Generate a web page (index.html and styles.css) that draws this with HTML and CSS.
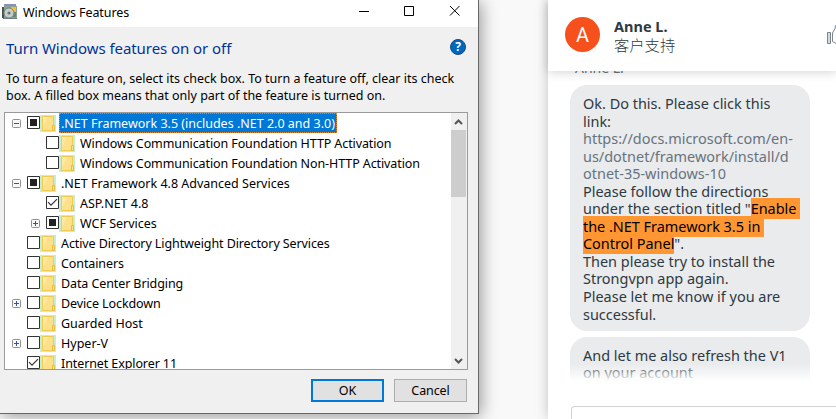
FILE: index.html
```
<!DOCTYPE html>
<html lang="en">
<head>
<meta charset="utf-8">
<title>Windows Features</title>
<link rel="stylesheet" href="styles.css">
</head>
<body>
<svg width="0" height="0" class="defs">
  <symbol id="folder" viewBox="0 0 16 17"><path fill="#c6efce" d="M0 0h16v17H0z"/><path fill="#ffe08a" stroke="#f0cb4f" d="M2.5 1.5h11v14h-11z"/><path fill="#ffe9a6" d="M3 2h5L3 12z"/><path fill="#ffe08a" stroke="#e8bd3c" d="M12.5 10.5h2v5h-2z"/></symbol>
  <symbol id="minus" viewBox="0 0 9 9"><rect x=".5" y=".5" width="8" height="8" rx="1" fill="#f8f8f8" stroke="#919191"/><path d="M2 4.5h5" stroke="#3455a4"/></symbol>
  <symbol id="plus" viewBox="0 0 9 9"><rect x=".5" y=".5" width="8" height="8" rx="1" fill="#f8f8f8" stroke="#919191"/><path d="M2 4.5h5M4.5 2v5" stroke="#3455a4"/></symbol>
  <symbol id="off" viewBox="0 0 13 13"><path d="M.5.5h12v12H.5z" fill="#fff" stroke="#333"/></symbol>
  <symbol id="part" viewBox="0 0 13 13"><path d="M.5.5h12v12H.5z" fill="#fff" stroke="#333"/><path d="M3 3h7v7H3z" fill="#222"/></symbol>
  <symbol id="on" viewBox="0 0 13 13"><path d="M.5.5h12v12H.5z" fill="#fff" stroke="#333"/><path d="M2 6.2l3 3 6-6" fill="none" stroke="#333" stroke-width="1.2"/></symbol>
</svg>
<main class="screen">
  <section class="window">
    <header class="titlebar">
      <svg class="app" width="16" height="17" viewBox="0 0 16 17"><path d="M2 1h12v3H2z" fill="#8791bd"/><path d="M2 3h13v13H2z" fill="#8ba294"/><path d="M9 4h5v5H9z" fill="#f5bd35"/><path d="M10 9h4v5h-4z" fill="#648a69"/><path d="M0 4h2v11H0z" fill="#47524f"/><circle cx="7" cy="10" r="5" fill="#c6ceca" stroke="#778580"/><circle cx="7" cy="10" r="1.6" fill="#68736f"/><path d="M1 15.5h14" stroke="#6e7c8b"/></svg>
      <h1>Windows Features</h1>
      <svg class="controls" width="108" height="12" viewBox="0 0 108 12" fill="none" stroke="#000"><path d="M0 6.5h10M45.500 1.500h9v9h-9zM91 1l9.500 9.500M100.500 1l-9.500 9.500"/></svg>
    </header>
    <div class="content">
      <div class="heading"><h2>Turn Windows features on or off</h2><span class="help">?</span></div>
      <p class="intro"><span>To turn a feature on, select its check box. To turn a feature off, clear its check</span><br><span>box. A filled box means that only part of the feature is turned on.</span></p>
      <div class="list">
        <ul class="tree">
          <li><svg class="exp"><use href="#minus"/></svg><svg class="check"><use href="#part"/></svg><svg class="folder"><use href="#folder"/></svg><span class="selected">.NET Framework 3.5 (includes .NET 2.0 and 3.0)</span></li>
          <li class="child"><i class="exp"></i><svg class="check"><use href="#off"/></svg><svg class="folder"><use href="#folder"/></svg><span>Windows Communication Foundation HTTP Activation</span></li>
          <li class="child"><i class="exp"></i><svg class="check"><use href="#off"/></svg><svg class="folder"><use href="#folder"/></svg><span>Windows Communication Foundation Non-HTTP Activation</span></li>
          <li><svg class="exp"><use href="#minus"/></svg><svg class="check"><use href="#part"/></svg><svg class="folder"><use href="#folder"/></svg><span class="wide">.NET Framework 4.8 Advanced Services</span></li>
          <li class="child"><i class="exp"></i><svg class="check"><use href="#on"/></svg><svg class="folder"><use href="#folder"/></svg><span class="wide">ASP.NET 4.8</span></li>
          <li class="child"><svg class="exp"><use href="#plus"/></svg><svg class="check"><use href="#part"/></svg><svg class="folder"><use href="#folder"/></svg><span class="wide">WCF Services</span></li>
          <li><i class="exp"></i><svg class="check"><use href="#off"/></svg><svg class="folder"><use href="#folder"/></svg><span>Active Directory Lightweight Directory Services</span></li>
          <li><i class="exp"></i><svg class="check"><use href="#off"/></svg><svg class="folder"><use href="#folder"/></svg><span>Containers</span></li>
          <li><i class="exp"></i><svg class="check"><use href="#off"/></svg><svg class="folder"><use href="#folder"/></svg><span>Data Center Bridging</span></li>
          <li><svg class="exp"><use href="#plus"/></svg><svg class="check"><use href="#off"/></svg><svg class="folder"><use href="#folder"/></svg><span>Device Lockdown</span></li>
          <li><i class="exp"></i><svg class="check"><use href="#off"/></svg><svg class="folder"><use href="#folder"/></svg><span class="wide">Guarded Host</span></li>
          <li><svg class="exp"><use href="#plus"/></svg><svg class="check"><use href="#off"/></svg><svg class="folder"><use href="#folder"/></svg><span class="wide">Hyper-V</span></li>
          <li><i class="exp"></i><svg class="check"><use href="#on"/></svg><svg class="folder"><use href="#folder"/></svg><span>Internet Explorer 11</span></li>
        </ul>
        <div class="scroll"><svg width="15" height="17" viewBox="0 0 15 17"><path d="M4 11l3.500-3.500L11 11" fill="none" stroke="#555" stroke-width="2"/></svg><div class="thumb"></div><svg class="down" width="15" height="17" viewBox="0 0 15 17"><path d="M4 7l3.500 3.500L11 7" fill="none" stroke="#555" stroke-width="2"/></svg></div>
      </div>
      <div class="buttons"><button class="ok">OK</button><button>Cancel</button></div>
    </div>
  </section>
  <section class="chat">
    <header class="agent"><div class="avatar">A</div><div class="who"><b>Anne L.</b><span>客户支持</span></div>
      <svg class="thumbup" width="9" height="22" viewBox="0 0 9 22" fill="none" stroke="#7b858e"><path d="M.5 8.500h3v11h-3z" fill="#d5d9dc"/><path d="M9 1.500h-.5l-.5 3L5.500 9v8.500L9 19.500"/></svg></header>
    <div class="messages">
      <div class="sender">Anne L.</div>
      <div class="bubble">Ok. Do this. Please click this<br>link:<br><span class="link">https://docs.microsoft.com/en-<br>us/dotnet/framework/install/d<br>otnet-35-windows-10</span><br>Please follow the directions<br>under the section titled "<mark>Enable </mark><br><mark>the .NET Framework 3.5 in </mark><br><mark>Control Panel</mark>".<br>Then please try to install the<br>Strongvpn app again.<br>Please let me know if you are<br>successful.</div>
      <div class="bubble next">And let me also refresh the V1<br>on your account</div>
    </div>
    <div class="input"></div>
  </section>
</main>
</body>
</html>
```
FILE: styles.css
```
* { box-sizing: border-box; }
body { margin: 0; background: #f9f9f9; font-family: "Noto Sans", "Noto Sans CJK SC", sans-serif; color: #000; }
.defs { position: absolute; }
.screen { width: 836px; height: 419px; display: flex; overflow: hidden; }
.window { width: 479px; height: 414px; background: #f0f0f0; border: solid #686868; border-width: 0 1px 1px 0; box-shadow: 2px 2px 16px rgba(0,0,0,.4); flex: none; }
.titlebar { height: 27px; background: #fff; display: flex; align-items: flex-start; }
.app { margin: 3px 0 0 2px; }
h1 { font-size: 12.5px; letter-spacing: -.08px; line-height: 18px; font-weight: 400; margin: 4px 0 0 5px; width: 336px; }
.controls { margin-top: 5px; flex: none; }
.content { padding: 0 11px 0 4px; }
.heading { display: flex; height: 43px; padding: 10px 2px 0; justify-content: space-between; }
h2 { font-size: 15px; letter-spacing: -.06px; line-height: 22px; font-weight: 400; color: #003399; margin: 0; }
.help { width: 16px; height: 16px; margin: 2px -1px 0 0; border-radius: 50%; background: #0067c0; border: 1px solid #17497f; color: #fff; font-weight: 700; font-size: 12px; line-height: 14px; text-align: center; }
.intro { margin: 0 0 0 2px; height: 42px; font-size: 12.5px; line-height: 16.500px; padding-top: 1px; white-space: nowrap; }
.list { width: 464px; height: 258px; border: 1px solid #9b9b9b; background: #fff; display: flex; overflow: hidden; }
.tree { flex: 1; margin: 0; padding: 0; list-style: none; font-size: 12.5px; letter-spacing: -.1px; line-height: 20px; }
.tree li { height: 20px; padding-left: 7px; display: flex; align-items: center; white-space: nowrap; }
.tree li.child { padding-left: 26px; }
.exp { width: 9px; height: 9px; margin-top: 1px; flex: none; }
.check { width: 13px; height: 13px; margin-left: 6px; margin-top: -1px; flex: none; }
.folder { width: 16px; height: 17px; flex: none; margin-top: 1px; }
.tree span { height: 20px; line-height: 22px; margin-left: 3px; padding-left: 2px; }
.tree .wide { letter-spacing: 0; }
.tree .selected { background: #0078d7; color: #fff; width: 278px; letter-spacing: 0; outline: 1px dotted #e58836; outline-offset: -1px; }
.scroll { width: 16px; background: #f0f0f0; display: flex; flex-direction: column; padding-right: 1px; }
.scroll svg { display: block; flex: none; }
.thumb { height: 67px; background: #cdcdcd; }
.down { margin-top: auto; }
.buttons { display: flex; justify-content: flex-end; gap: 10px; padding-top: 9px; }
button { width: 73px; height: 23px; border: 1px solid #adadad; background: #e1e1e1; font: 12.5px/18px "Noto Sans", sans-serif; letter-spacing: -.1px; padding: 1px 0 0; color: #000; }
.ok { border: 2px solid #0078d7; }
.chat { width: 288px; height: 419px; margin-left: 69px; background: #fff; box-shadow: 0 0 12px rgba(0,0,0,.22); flex: none; display: flex; flex-direction: column; }
.agent { height: 71px; flex: none; display: flex; padding-left: 17px; background: #fff; box-shadow: 0 1px 10px rgba(0,0,0,.18); position: relative; z-index: 1; }
.avatar { width: 35px; height: 35px; margin-top: 17px; border-radius: 50%; background: #f6511d; color: #fff; text-align: center; font: 20px/36px Roboto, sans-serif; }
.who { margin: 17px 0 0 14px; width: 213px; color: #2f3941; font-size: 14.5px; line-height: 19px; }
.who b, .who span { display: block; }
.who span { font-family: "Noto Sans CJK SC", sans-serif; font-size: 15.3px; font-weight: 300; line-height: 16px; }
.thumbup { margin-top: 24px; flex: none; }
.messages { height: 310px; flex: none; overflow: hidden; padding-left: 22px; position: relative; color: #2f3941; }
.messages::after { content: ""; position: absolute; left: 0; right: 0; bottom: 0; height: 17px; background: linear-gradient(#fff0, #fff); }
.sender { height: 14px; line-height: 14px; font-size: 14px; margin-left: 5px; margin-top: -10px; margin-bottom: 10px; color: #68737d; }
.bubble { width: 240px; height: 246px; padding: 10px 0 0 13px; border-radius: 17px; background: #e9ebed; font-size: 14.460px; line-height: 17.550px; white-space: pre; }
.next { margin-top: 6px; height: 60px; padding-top: 9.5px; line-height: 17.5px; }
.link { color: #68737d; }
mark { background: #ff9632; color: #000; padding: 1px 0; letter-spacing: -.02px; }
.input { margin: 25px 0 0 23px; height: 40px; border: 1px solid #d0d3d6; border-radius: 4px 0 0 0; flex: none; border-right: 0; }
```
